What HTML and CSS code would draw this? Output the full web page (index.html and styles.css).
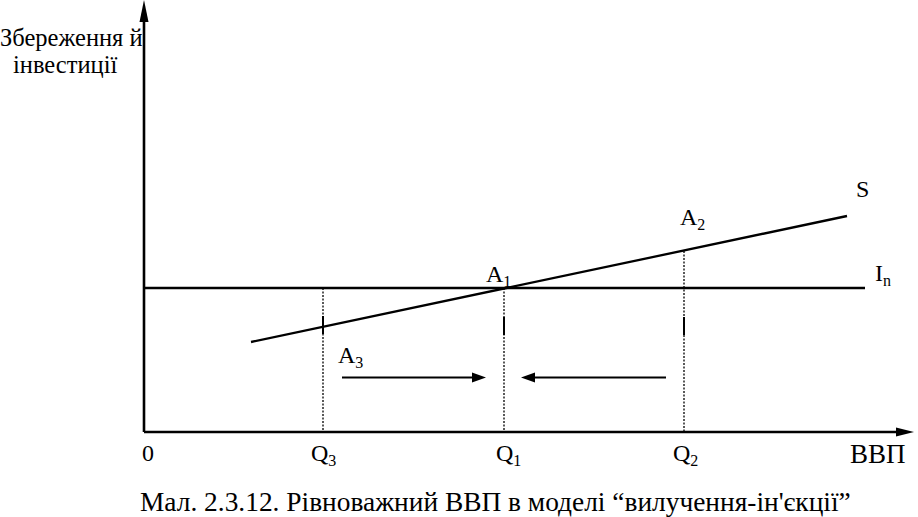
FILE: index.html
```html
<!DOCTYPE html>
<html>
<head>
<meta charset="utf-8">
<title>Рівноважний ВВП</title>
<link rel="stylesheet" href="styles.css">
</head>
<body>
<figure class="figure">
  <svg class="chart" width="918" height="487" viewBox="0 0 918 487" xmlns="http://www.w3.org/2000/svg">
    <g class="axis">
      <line x1="144" y1="18" x2="144" y2="432"/>
      <line x1="144" y1="432" x2="898" y2="432"/>
    </g>
    <polygon class="head" points="144,0 139.5,22 148.5,22"/>
    <polygon class="head" points="914,432 896,427.5 896,436.5"/>

    <line class="curve" x1="145" y1="288" x2="865" y2="288"/>
    <line class="curve" x1="251" y1="342" x2="847" y2="216"/>

    <g class="dotted">
      <line x1="323" y1="288" x2="323" y2="431"/>
      <line x1="504" y1="288" x2="504" y2="431"/>
      <line x1="684" y1="251" x2="684" y2="431"/>
    </g>
    <g class="tick">
      <line x1="323" y1="316" x2="323" y2="334"/>
      <line x1="504" y1="317" x2="504" y2="335"/>
      <line x1="684" y1="317" x2="684" y2="335"/>
    </g>

    <line class="arrow" x1="342" y1="377.5" x2="474" y2="377.5"/>
    <polygon class="head" points="486,377.5 472,372.5 472,382.5"/>
    <line class="arrow" x1="534" y1="377.5" x2="666" y2="377.5"/>
    <polygon class="head" points="521,377.5 535,372.5 535,382.5"/>

    <g class="label">
      <text class="ylabel" x="0" y="46">Збереження й</text>
      <text class="ylabel" x="13" y="73">інвестиції</text>
      <text x="486" y="282">A<tspan class="sub" dy="5">1</tspan></text>
      <text x="680" y="225">A<tspan class="sub" dy="5">2</tspan></text>
      <text x="338" y="363">A<tspan class="sub" dy="5">3</tspan></text>
      <text x="856" y="197">S</text>
      <text x="875" y="281">I<tspan class="sub" dy="5">n</tspan></text>
      <text x="142" y="461">0</text>
      <text x="311" y="461">Q<tspan class="sub" dy="5">3</tspan></text>
      <text x="496" y="461">Q<tspan class="sub" dy="5">1</tspan></text>
      <text x="673" y="461">Q<tspan class="sub" dy="5">2</tspan></text>
      <text class="xname" x="850" y="463">ВВП</text>
    </g>
  </svg>
  <figcaption class="caption">Мал. 2.3.12. Рівноважний ВВП в моделі “вилучення-ін'єкції”</figcaption>
</figure>
</body>
</html>
```

FILE: styles.css
```css
html, body {
  margin: 0;
  padding: 0;
  background: #ffffff;
}

.figure {
  margin: 0;
  width: 918px;
  height: 517px;
  overflow: hidden;
}

.chart {
  display: block;
}

.axis line {
  stroke: #000;
  stroke-width: 2.6;
}

.head {
  fill: #000;
}

.curve {
  stroke: #000;
  stroke-width: 2.3;
}

.dotted line {
  stroke: #000;
  stroke-width: 1.3;
  stroke-dasharray: 2 1.5;
}

.tick line {
  stroke: #000;
  stroke-width: 2;
}

.arrow {
  stroke: #000;
  stroke-width: 2;
}

.label text {
  font-family: "Liberation Serif", serif;
  font-size: 24px;
  fill: #000;
}

.label .ylabel {
  font-size: 24.5px;
}

.label .xname {
  font-size: 27px;
}

.label .sub {
  font-size: 16px;
}

.caption {
  font-family: "Liberation Serif", serif;
  font-size: 27.4px;
  color: #000;
  padding-left: 140px;
  white-space: nowrap;
}
```
